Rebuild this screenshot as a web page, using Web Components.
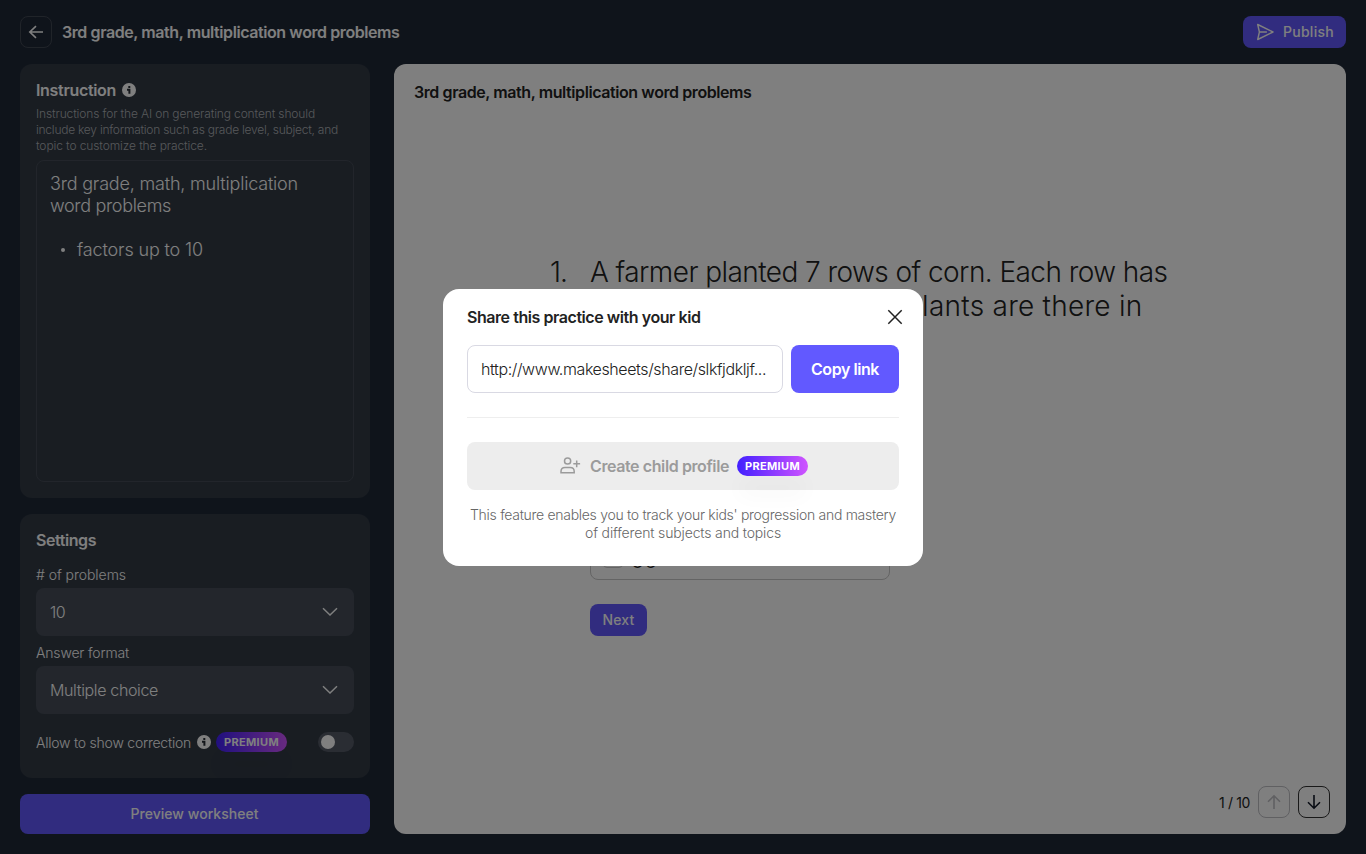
<!DOCTYPE html>
<html lang="en">
<head>
<meta charset="utf-8">
<title>Worksheet editor</title>
<style>
html,body{margin:0;height:100%;overflow:hidden}
body{font-family:Inter,"Liberation Sans",sans-serif;font-size:16px;color:#fff}
</style>
</head>
<body>
<worksheet-app></worksheet-app>
<script>
const define=(name,html,setup)=>customElements.define(name,class extends HTMLElement{
  connectedCallback(){
    if(this.shadowRoot)return;
    const root=this.attachShadow({mode:'open'});
    root.innerHTML=typeof html==='function'?html(this):html;
    if(setup)setup(this,root);
  }
});

/* One line of text tracked to a given measure. */
define('ui-text','<style>:host{display:block;white-space:pre;width:max-content}span{display:inline-block}</style><span><slot></slot></span>',(el,root)=>{
  const w=+el.getAttribute('w');
  if(!w)return;
  const s=root.querySelector('span'),n=el.textContent.length;
  s.style.letterSpacing=((w-s.getBoundingClientRect().width)/n).toFixed(3)+'px';
});

const icons={
  back:[16,16,'<path d="M8 2.2 1.8 8 8 13.8M1.8 8H15"/>',1.6],
  down:[16,16,'<path d="M8 1v13.2M2 8.2l6 6 6-6"/>',1.6],
  up:[16,16,'<path d="M8 15V1.8M2 7.8l6-6 6 6"/>',1.6],
  chevron:[16,10,'<path d="M1 1.3 8 8l7-6.7"/>',1.5],
  close:[16,16,'<path d="M1.3 1.3l13.4 13.4M14.7 1.3 1.3 14.7"/>',1.5],
  send:[18,18,'<path d="M1.7 1.5 17 9 1.7 16.5 3.4 9ZM3.4 9h7.5" stroke-linejoin="round"/>',1.4],
  user:[22,18,'<circle cx="7.6" cy="4" r="3.1"/><path d="M1 15.8v-1.4c0-2.6 1.8-4 4-4h5.2c2.2 0 4 1.4 4 4v1.4ZM16.7 3.4v6.8M13.3 6.8h6.8"/>',1.5],
  info:[14,14,'<circle cx="7" cy="7" r="7" fill="currentColor" stroke="none"/><path d="M5 6.7h2.4v4.1M7.3 3v2.1" stroke="#262c35"/>',2]
};
define('ui-icon',el=>{
  const [w,h,d,s]=icons[el.getAttribute('name')];
  return `<style>:host{display:inline-flex;flex:none}svg{display:block}</style><svg width="${w}" height="${h}" viewBox="0 0 ${w} ${h}" fill="none" stroke="currentColor" stroke-width="${s}">${d}</svg>`;
});

define('premium-badge',`<style>:host{display:flex;flex:none;align-items:center;justify-content:center;width:71px;height:20px;border-radius:10px;background:linear-gradient(90deg,#4220ff,#d054ff);color:#fff;font-size:11px;font-weight:700;box-shadow:0 22px 20px rgba(0,0,0,.025)}</style><ui-text w="55">PREMIUM</ui-text>`);

define('ui-button',`<style>:host{display:flex;align-items:center;justify-content:center;box-sizing:border-box;background:#6259ff;color:#fff;border-radius:8px;font-weight:550;font-size:14px;padding-bottom:1px}</style><slot></slot>`);

define('icon-button',`<style>:host{display:flex;align-items:center;justify-content:center;box-sizing:border-box;width:32px;height:32px;border:1px solid currentColor;border-radius:8px}</style><slot></slot>`);

define('select-field',`<style>:host{display:block;font-weight:300}.l{height:20px;line-height:20px;font-size:14px;margin-bottom:3px}.b{display:flex;align-items:center;justify-content:space-between;height:48px;box-sizing:border-box;padding:0 16px 0 14px;border-radius:8px;background:#464d59}</style><div class="l"><slot name="label"></slot></div><div class="b"><slot></slot><ui-icon name="chevron"></ui-icon></div>`);

define('app-header',`<style>:host{display:flex;align-items:center;height:64px;padding:0 20px}
icon-button{color:#414853;margin-right:10px}icon-button ui-icon{color:#fff}.t{font-weight:600}
ui-button{margin-left:auto;width:103px;height:32px;gap:9px;padding-left:1px}</style>
<icon-button><ui-icon name="back"></ui-icon></icon-button><ui-text class="t" w="337.5">3rd grade, math, multiplication word problems</ui-text>
<ui-button><ui-icon name="send"></ui-icon><ui-text w="51">Publish</ui-text></ui-button>`);

define('instruction-card',`<style>:host{display:flex;flex-direction:column;box-sizing:border-box;height:434px;padding:16px;border-radius:12px;background:#323a45}
.h{display:flex;align-items:center;gap:6px;height:20px;font-weight:600}
.d{margin:6px 0;font-size:12px;line-height:16px;font-weight:300;color:#aeb1b5}
.d ui-text{height:16px}
.e{flex:1;box-sizing:border-box;border:1px solid #444b56;border-radius:8px;padding:12px 13px 11px;font-size:18px;line-height:22px;font-weight:300}
.li{display:flex;align-items:center;margin-top:22px;padding-left:11px}.dot{width:4px;height:4px;border-radius:2px;background:#fff;margin-right:12px}</style>
<div class="h"><ui-text w="80">Instruction</ui-text><ui-icon name="info"></ui-icon></div>
<div class="d"><ui-text w="279">Instructions for the AI on generating content should</ui-text><ui-text w="302">include key information such as grade level, subject, and</ui-text><ui-text w="171">topic to customize the practice.</ui-text></div>
<div class="e"><ui-text w="248">3rd grade, math, multiplication</ui-text><ui-text w="121">word problems</ui-text><div class="li"><span class="dot"></span><ui-text w="126">factors up to 10</ui-text></div></div>`);

define('toggle-switch',`<style>:host{display:flex;align-items:center;width:36px;height:20px;box-sizing:border-box;padding:3px;border-radius:10px;background:#555a67}i{width:14px;height:14px;border-radius:7px;background:#fff}</style><i></i>`);

define('settings-card',`<style>:host{display:block;box-sizing:border-box;height:264px;margin-top:16px;padding:16px;border-radius:12px;background:#323a45}
.h{height:20px;line-height:20px;font-weight:600;margin-bottom:15px}select-field+select-field{margin-top:7px}
.r{display:flex;align-items:center;height:20px;margin-top:18px;font-size:14px;font-weight:300}ui-icon{margin:0 5px 0 6px}toggle-switch{margin-left:auto}</style>
<div class="h"><ui-text w="60">Settings</ui-text></div>
<select-field><ui-text slot="label" w="90">&#35; of problems</ui-text><ui-text w="15">10</ui-text></select-field>
<select-field><ui-text slot="label" w="93">Answer format</ui-text><ui-text w="108">Multiple choice</ui-text></select-field>
<div class="r"><ui-text w="155">Allow to show correction</ui-text><ui-icon name="info"></ui-icon><premium-badge></premium-badge><toggle-switch></toggle-switch></div>`);

define('answer-option',`<style>:host{display:flex;align-items:center;box-sizing:border-box;width:300px;height:44px;padding:0 12px;gap:8px;border:1px solid #c8c8c8;border-radius:8px;color:#222;font-size:22px;line-height:28px;font-weight:350}i{box-sizing:border-box;width:20px;height:20px;border:1px solid #c8c8c8;border-radius:4px}.v{padding-top:3px}</style><i></i><div class="v"><slot></slot></div>`);

define('worksheet-preview',`<style>:host{display:flex;flex-direction:column;box-sizing:border-box;width:952px;height:770px;padding:18px 16px 16px 20px;border-radius:12px;background:#fff;color:#222}
.t{height:20px;line-height:20px;font-weight:600}
.q{display:flex;margin:153px 0 0 136px;font-size:28px;line-height:34px;font-weight:320;height:277px}.n{width:40px;flex:none}.body{display:flex;flex-direction:column;justify-content:space-between;height:325px;flex:none}
.cont{margin-left:315px}
ui-button{width:57px;height:32px;margin:72px 0 0 176px}
.p{display:flex;align-items:center;justify-content:flex-end;margin-top:auto;gap:8px;font-size:14px}.p .off{color:#c0c0c5}.p .on{color:#333}.on ui-icon{color:#111827}</style>
<ui-text class="t" w="337.5">3rd grade, math, multiplication word problems</ui-text>
<div class="q"><div class="n"><ui-text w="17">1.</ui-text></div><div class="body"><div><ui-text w="577.5">A farmer planted 7 rows of corn. Each row has</ui-text><ui-text class="cont" w="237.5">plants are there in</ui-text></div><answer-option>56</answer-option></div></div>
<ui-button><ui-text w="32">Next</ui-text></ui-button>
<div class="p"><ui-text w="31">1 / 10</ui-text><icon-button class="off"><ui-icon name="up"></ui-icon></icon-button><icon-button class="on"><ui-icon name="down"></ui-icon></icon-button></div>`);

define('share-dialog',`<style>:host{display:block;box-sizing:border-box;width:480px;height:277px;padding:16px 24px 24px;border-radius:16px;background:#fff;color:#222}
.h{display:flex;align-items:center;justify-content:space-between;height:24px;margin-right:-4px;font-weight:600}
.row{display:flex;gap:8px;margin-top:16px}.in{flex:1;height:48px;box-sizing:border-box;border:1px solid #d9d9e3;border-radius:8px;padding:0 13px;display:flex;align-items:center;font-weight:350}
.copy{width:108px;height:48px;font-size:16px;font-weight:600;padding-bottom:0}hr{border:0;height:1px;background:#eee;margin:24px 0}
.create{height:48px;background:#ededed;color:#9b9b9b;font-size:16px;font-weight:600;gap:8px;padding:0 0 0 2px}
.d{margin-top:16px;font-size:14px;line-height:18px;color:#666;font-weight:350;display:flex;flex-direction:column;align-items:center}</style>
<div class="h"><ui-text w="233.5">Share this practice with your kid</ui-text><ui-icon name="close"></ui-icon></div>
<div class="row"><div class="in"><ui-text w="285">http://www.makesheets/share/slkfjdkljf...</ui-text></div><ui-button class="copy"><ui-text w="68">Copy link</ui-text></ui-button></div>
<hr>
<ui-button class="create"><ui-icon name="user"></ui-icon><ui-text w="139">Create child profile</ui-text><premium-badge></premium-badge></ui-button>
<div class="d"><ui-text w="426">This feature enables you to track your kids' progression and mastery</ui-text><ui-text w="196">of different subjects and topics</ui-text></div>`);

define('worksheet-app',`<style>:host{display:block;position:relative;width:1366px;height:854px;background:#1f2937}
main{display:flex;gap:24px;padding:0 20px}.side{width:350px}.side>ui-button{height:40px;margin-top:16px;padding-right:1px}
.overlay{position:absolute;inset:0;display:flex;align-items:center;justify-content:center;background:rgba(0,0,0,.5)}</style>
<app-header></app-header>
<main><div class="side"><instruction-card></instruction-card><settings-card></settings-card><ui-button><ui-text w="128">Preview worksheet</ui-text></ui-button></div><worksheet-preview></worksheet-preview></main>
<div class="overlay"><share-dialog></share-dialog></div>`);
</script>
</body>
</html>
